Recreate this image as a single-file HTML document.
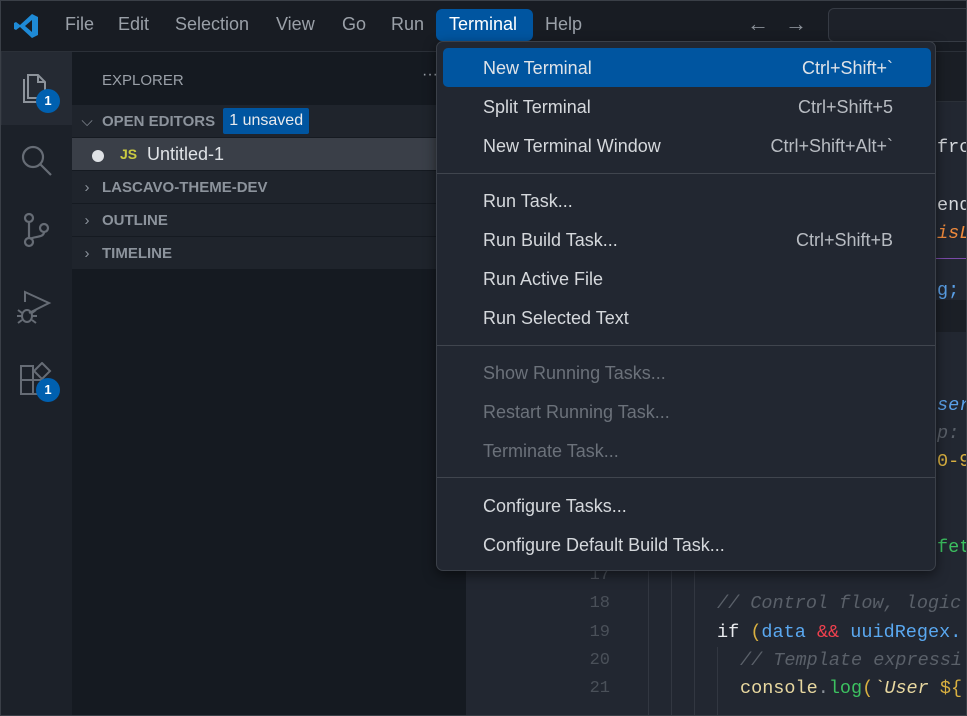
<!DOCTYPE html>
<html><head><meta charset="utf-8"><style>
*{margin:0;padding:0;box-sizing:border-box}
body{width:967px;height:716px;overflow:hidden;background:#222731;font-family:"Liberation Sans",sans-serif;position:relative}
.abs{position:absolute}
#title{left:0;top:0;width:967px;height:52px;background:#181c23;border-bottom:1px solid #2b3038}
.mi{position:absolute;top:14px;font-size:18px;color:#9aa0a8}
#act{left:0;top:52px;width:72px;height:664px;background:#1c2129}
#side{left:72px;top:52px;width:394px;height:664px;background:#151a21}
.row{position:absolute;left:72px;width:394px;height:33px;background:#1f242c;border-bottom:1px solid #151a21;font-size:15px;font-weight:bold;color:#8c939c;line-height:33px}
.row span.c{display:inline-block;width:30px;text-align:center;font-weight:normal}
#menu{left:436px;top:41px;width:500px;height:530px;background:#222731;border:1px solid #3b4049;border-radius:7px;box-shadow:0 4px 12px rgba(0,0,0,.5)}
.it{position:absolute;left:6px;width:488px;height:39px;font-size:18px;color:#d5d8dc;line-height:40px;padding-left:40px}
.it b{position:absolute;right:38px;top:0;font-weight:normal;color:#b8bcc2}
.dis{color:#6b717a}
.sep{position:absolute;left:0;width:498px;height:1px;background:#40454e}
.code{position:absolute;font-family:"Liberation Mono",monospace;font-size:18.5px;white-space:pre}
.ln{position:absolute;left:560px;width:50px;text-align:right;font-family:"Liberation Mono",monospace;font-size:17px;color:#4a5059}
.g{position:absolute;width:1px;background:#323741}
</style></head><body>
<div id="title" class="abs">
<svg class="abs" style="left:13px;top:13px" width="26" height="26" viewBox="0 0 26 26"><path d="M19 1 L25 4 V22 L19 25 L7 14 L3 17 L1 16 V10 L3 9 L7 12 Z M19 7 L12 13 L19 19 Z" fill="#1e8ad6"/></svg>
<span class="mi" style="left:65px">File</span>
<span class="mi" style="left:118px">Edit</span>
<span class="mi" style="left:175px">Selection</span>
<span class="mi" style="left:276px">View</span>
<span class="mi" style="left:342px">Go</span>
<span class="mi" style="left:391px">Run</span>
<div class="abs" style="left:436px;top:9px;width:97px;height:32px;background:#0055a0;border-radius:6px"></div>
<span class="mi" style="left:449px;color:#fff">Terminal</span>
<span class="mi" style="left:545px">Help</span>
<span class="mi" style="left:747px;font-size:22px;top:11px;color:#8a9098">←</span>
<span class="mi" style="left:785px;font-size:22px;top:11px;color:#8a9098">→</span>
<div class="abs" style="left:828px;top:8px;width:145px;height:34px;border:1px solid #363b44;border-radius:6px;background:#1d2129"></div>
</div>
<div id="act" class="abs">
<div class="abs" style="left:0;top:0;width:72px;height:73px;background:#252a33;border-left:2px solid #2a2f38"></div>
<svg class="abs" style="left:18px;top:17px" width="34" height="34" viewBox="0 0 34 34" fill="none" stroke="#8d939b" stroke-width="2"><path d="M10 6 H20 L27 13 V29 H10 Z M20 6 V13 H27"/><path d="M6 10 V33 H22"/></svg>
<div class="abs" style="left:36px;top:37px;width:24px;height:24px;border-radius:12px;background:#0060b0;color:#fff;font-size:13px;font-weight:bold;text-align:center;line-height:24px">1</div>
<svg class="abs" style="left:18px;top:90px" width="36" height="36" viewBox="0 0 36 36" fill="none" stroke="#666c75" stroke-width="2.2"><circle cx="15" cy="15" r="10"/><path d="M22 22 L33 33"/></svg>
<svg class="abs" style="left:20px;top:158px" width="34" height="40" viewBox="0 0 34 40" fill="none" stroke="#666c75" stroke-width="2.2"><circle cx="9" cy="8" r="4"/><circle cx="9" cy="32" r="4"/><circle cx="24" cy="18" r="4"/><path d="M9 12 V28 M24 22 C24 28 14 26 10 29"/></svg>
<svg class="abs" style="left:16px;top:238px" width="36" height="36" viewBox="0 0 36 36" fill="none" stroke="#666c75" stroke-width="2"><path d="M9 12 V2 L33 13 L13 23"/><ellipse cx="11" cy="26" rx="5" ry="6"/><path d="M2 20 L6 23 M2 33 L6 30 M20 20 L16 23 M20 33 L16 30 M1 26 H6 M16 26 H21"/></svg>
<svg class="abs" style="left:18px;top:310px" width="36" height="36" viewBox="0 0 36 36" fill="none" stroke="#666c75" stroke-width="2"><path d="M3 4 H15 V32 H3 Z M3 18 H29 V32 H15"/><path d="M24 1 L32 9 L24 17 L16 9 Z"/></svg>
<div class="abs" style="left:36px;top:326px;width:24px;height:24px;border-radius:12px;background:#0060b0;color:#fff;font-size:13px;font-weight:bold;text-align:center;line-height:24px">1</div>
</div>
<div id="side" class="abs">
<span class="abs" style="left:30px;top:20px;font-size:15px;color:#9aa0a8">EXPLORER</span>
<span class="abs" style="left:350px;top:14px;font-size:16px;color:#9aa0a8">···</span>
</div>
<div class="row" style="top:105px"><span class="c">⌵</span>OPEN EDITORS <span style="display:inline-block;margin-left:4px;background:#0055a0;color:#e8eaed;font-weight:normal;font-size:16px;line-height:26px;padding:0 6px;border-radius:2px;vertical-align:1px">1 unsaved</span></div>
<div class="row" style="top:138px;background:#3a3f48;font-weight:normal;color:#dfe2e6;font-size:18px"><span class="abs" style="left:20px;top:12px;width:12px;height:12px;border-radius:6px;background:#dfe2e6"></span><span class="abs" style="left:48px;font-size:14px;font-weight:bold;color:#cbcb41">JS</span><span class="abs" style="left:75px">Untitled-1</span></div>
<div class="row" style="top:171px"><span class="c">›</span>LASCAVO-THEME-DEV</div>
<div class="row" style="top:204px"><span class="c">›</span>OUTLINE</div>
<div class="row" style="top:237px"><span class="c">›</span>TIMELINE</div>
<!-- editor -->
<div class="abs" style="left:466px;top:52px;width:501px;height:50px;background:#1a1e25;border-bottom:1px solid #2b3038"></div>
<div class="abs" style="left:466px;top:300px;width:501px;height:32px;background:#1b1f26"></div>
<div class="abs" style="left:930px;top:258px;width:37px;height:1px;background:#7a4aa8"></div>
<div class="g" style="left:648px;top:100px;height:616px"></div>
<div class="g" style="left:671px;top:100px;height:616px"></div>
<div class="g" style="left:694px;top:100px;height:616px"></div>
<div class="g" style="left:717px;top:647px;height:69px"></div>
<div class="code" style="left:937px;top:137px;color:#d5d8dc">from</div>
<div class="code" style="left:937px;top:195px;color:#d5d8dc">end</div>
<div class="code" style="left:937px;top:223px;color:#f08a3c;font-style:italic">isL</div>
<div class="code" style="left:937px;top:280px;color:#5aa0e8">g;</div>
<div class="code" style="left:937px;top:395px;color:#5aa0e8;font-style:italic">ser</div>
<div class="code" style="left:937px;top:423px;color:#5a6069;font-style:italic">p:</div>
<div class="code" style="left:937px;top:451px;color:#d9b040">0-9</div>
<div class="code" style="left:937px;top:537px;color:#3cc060">fet</div>
<div class="ln" style="top:566px">17</div>
<div class="ln" style="top:594px">18</div>
<div class="ln" style="top:623px">19</div>
<div class="ln" style="top:651px">20</div>
<div class="ln" style="top:679px">21</div>
<div class="code" style="left:717px;top:593px;color:#5a6069;font-style:italic">// Control flow, logic</div>
<div class="code" style="left:717px;top:622px;color:#e8eaed">if <span style="color:#d9b040">(</span><span style="color:#5aa8f0">data</span> <span style="color:#f0404e">&amp;&amp;</span> <span style="color:#5aa8f0">uuidRegex.</span></div>
<div class="code" style="left:740px;top:650px;color:#5a6069;font-style:italic">// Template expressi</div>
<div class="code" style="left:740px;top:678px;color:#e8d8a0">console<span style="color:#8a9098">.</span><span style="color:#3cc060">log</span><span style="color:#d9b040">(</span><span style="font-style:italic">`User </span><span style="color:#d9b040">${</span></div>
<!-- menu -->
<div id="menu" class="abs">
<div class="it" style="top:6px;background:#0055a0;border-radius:5px;color:#dfe3e8">New Terminal<b style="color:#dfe3e8">Ctrl+Shift+`</b></div>
<div class="it" style="top:45px">Split Terminal<b>Ctrl+Shift+5</b></div>
<div class="it" style="top:84px">New Terminal Window<b>Ctrl+Shift+Alt+`</b></div>
<div class="sep" style="top:131px"></div>
<div class="it" style="top:139px">Run Task...</div>
<div class="it" style="top:178px">Run Build Task...<b>Ctrl+Shift+B</b></div>
<div class="it" style="top:217px">Run Active File</div>
<div class="it" style="top:256px">Run Selected Text</div>
<div class="sep" style="top:303px"></div>
<div class="it dis" style="top:311px">Show Running Tasks...</div>
<div class="it dis" style="top:350px">Restart Running Task...</div>
<div class="it dis" style="top:389px">Terminate Task...</div>
<div class="sep" style="top:435px"></div>
<div class="it" style="top:444px">Configure Tasks...</div>
<div class="it" style="top:483px">Configure Default Build Task...</div>
</div>
<div class="abs" style="left:0;top:0;width:967px;height:716px;border:1px solid #3a3f47;pointer-events:none"></div>
</body></html>
